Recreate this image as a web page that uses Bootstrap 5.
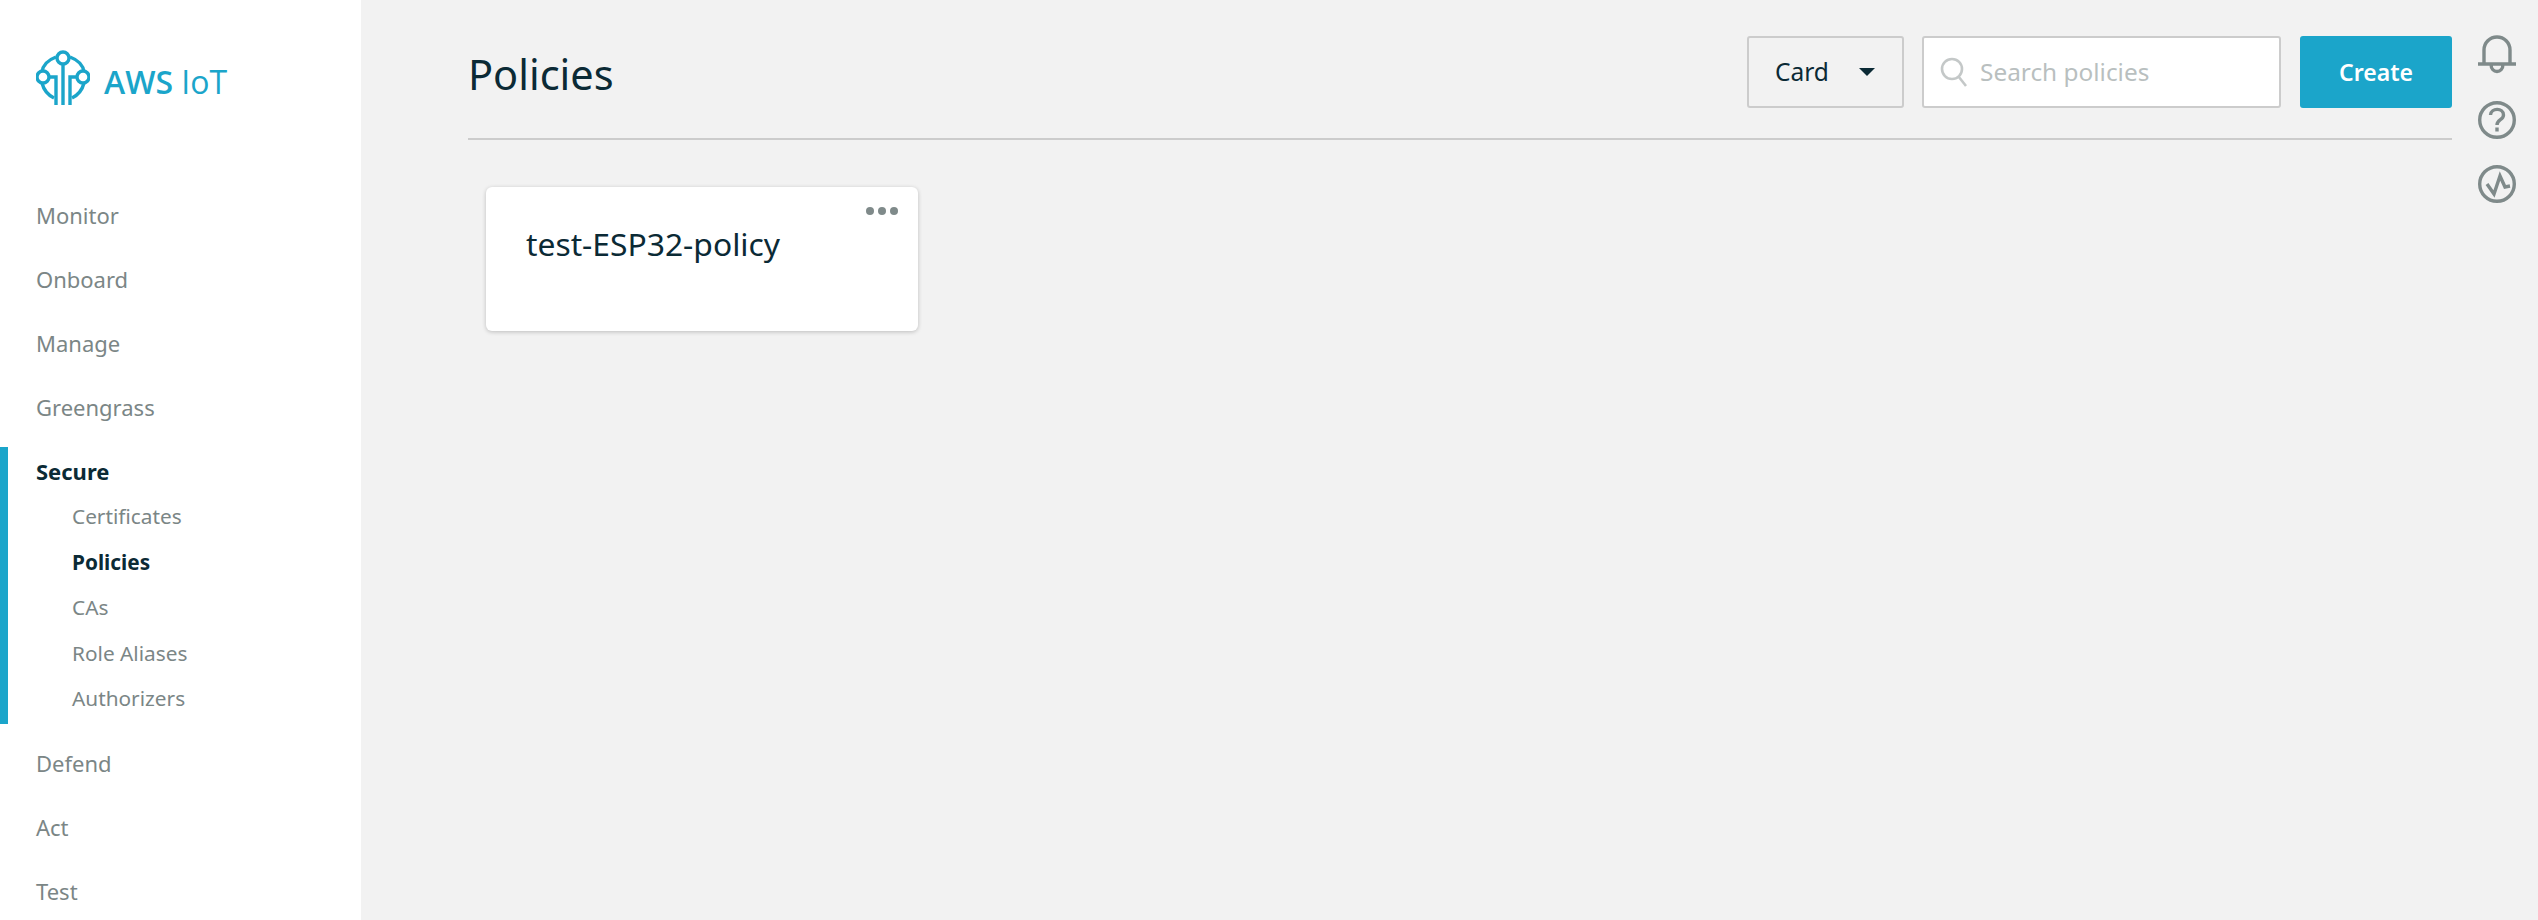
<!DOCTYPE html>
<html lang="en">

<head>
    <meta charset="UTF-8">
    <meta name="viewport" content="width=device-width, initial-scale=1.0">
    <title>AWS IoT - Policies</title>

    <link href="https://cdn.jsdelivr.net/npm/bootstrap@5.3.0/dist/css/bootstrap.min.css" rel="stylesheet">
    <script src="https://cdn.jsdelivr.net/npm/bootstrap@5.3.0/dist/js/bootstrap.bundle.min.js"></script>

    <style>
        body {
            background: #f2f2f2;
            color: #0b2a35;
            font-family: "Noto Sans", "Open Sans", sans-serif;
            height: 920px;
            overflow: hidden;
        }

        .side-panel {
            width: 361px;
            height: 920px;
            background: #fff;
            overflow: hidden;
        }

        .brand-row {
            height: 183px;
            padding: 50px 0 0 36px;
            color: #1ba5ca;
        }

        .brand-name {
            font-family: "Open Sans", sans-serif;
            font-size: 32px;
            line-height: 36px;
            margin: 14px 0 0 14px;
            font-weight: 600;
            white-space: nowrap;
        }

        .brand-name span {
            font-weight: 400;
        }

        .nav-top {
            display: block;
            height: 64px;
            line-height: 64px;
            padding-left: 36px;
            font-size: 22px;
            color: #7b8686;
            text-decoration: none;
        }

        .nav-block {
            border-left: 8px solid #1ba5ca;
            height: 277px;
            margin: 8px 0 7px;
        }

        .nav-block .nav-top {
            padding-left: 28px;
            height: 47px;
            line-height: 48px;
            color: #0b2a35;
            font-weight: 700;
        }

        .nav-sub {
            display: block;
            height: 45.6px;
            line-height: 44.6px;
            padding-left: 64px;
            font-size: 20.8px;
            color: #7b8686;
            text-decoration: none;
        }

        .nav-sub.is-current {
            color: #0b2a35;
            font-weight: 700;
        }

        .main-pane {
            padding: 36px 0 0 107px;
        }

        .page-head {
            height: 104px;
            border-bottom: 2px solid #ccc;
        }

        .page-title {
            font-size: 41.5px;
            line-height: 76px;
            font-weight: 400;
            margin: 0;
        }

        .view-btn {
            width: 157px;
            height: 72px;
            background: #f2f2f2;
            border: 2px solid #ccc;
            border-radius: 3px;
            font-size: 24.5px;
            color: #0b2a35;
            padding: 0 0 0 26px;
        }

        .view-btn::after {
            border-top-color: #0b2a35;
            border-width: 8px 8px 0;
            margin-left: 30px;
            vertical-align: 5px;
        }

        .search-box {
            width: 359px;
            height: 72px;
            background: #fff;
            border: 2px solid #ccc;
            border-radius: 3px;
            margin-left: 18px;
            padding-left: 16px;
        }

        .search-box input {
            border: 0;
            outline: 0;
            background: none;
            width: 280px;
            margin-left: 10px;
            font-size: 24.4px;
            color: #0b2a35;
        }

        .search-box input::placeholder {
            color: #b9bfbf;
        }

        .create-btn {
            width: 152px;
            height: 72px;
            margin-left: 19px;
            background: #1ba5ca;
            border: 0;
            border-radius: 3px;
            color: #fff;
            font-size: 23px;
            font-weight: 600;
        }

        .policy-tile {
            width: 432px;
            height: 144px;
            margin: 47px 0 0 18px;
            border: 0;
            border-radius: 6px;
            box-shadow: 0 1px 4px rgba(0, 0, 0, .22);
            padding: 36px 0 0 40px;
            font-size: 31.8px;
            line-height: 42px;
            color: #0b2a35;
        }

        .dots {
            position: absolute;
            top: 20px;
            right: 20px;
            gap: 4px;
        }

        .dots i {
            display: block;
            width: 8px;
            height: 8px;
            border-radius: 50%;
            background: #7f8a8a;
        }

        .icon-rail {
            width: 86px;
            padding: 35px 0 0 4px;
            gap: 25px;
        }
    </style>
</head>

<body>
    <div class="d-flex">
        <!-- sidebar -->
        <div class="side-panel flex-shrink-0">
            <div class="brand-row d-flex align-items-start">
                <svg width="54" height="56" viewBox="0 0 54 56" fill="none" stroke="#1ba5ca" stroke-width="3.4">
                    <path d="M20 7C12 10 7 14 6 22M34 7C42 10 47 14 48 22M6 33C8 41 12 45 18 48M48 33C46 41 42 45 36 48" />
                    <circle cx="27" cy="8" r="6" fill="#fff" />
                    <circle cx="7" cy="27" r="6" fill="#fff" />
                    <circle cx="47" cy="27" r="6" fill="#fff" />
                    <path d="M27 14V55M13 27H20V55M41 27H34V55" />
                </svg>
                <div class="brand-name">AWS <span>IoT</span></div>
            </div>

            <a class="nav-top" href="#">Monitor</a>
            <a class="nav-top" href="#">Onboard</a>
            <a class="nav-top" href="#">Manage</a>
            <a class="nav-top" href="#">Greengrass</a>
            <div class="nav-block">
                <a class="nav-top" href="#">Secure</a>
                <a class="nav-sub" href="#">Certificates</a>
                <a class="nav-sub is-current" href="#">Policies</a>
                <a class="nav-sub" href="#">CAs</a>
                <a class="nav-sub" href="#">Role Aliases</a>
                <a class="nav-sub" href="#">Authorizers</a>
            </div>
            <a class="nav-top" href="#">Defend</a>
            <a class="nav-top" href="#">Act</a>
            <a class="nav-top" href="#">Test</a>
        </div>

        <!-- main content -->
        <div class="main-pane flex-grow-1">
            <div class="page-head d-flex justify-content-between align-items-start">
                <h1 class="page-title">Policies</h1>
                <div class="d-flex">
                    <div class="dropdown">
                        <button class="view-btn dropdown-toggle text-start" type="button" data-bs-toggle="dropdown">Card</button>
                    </div>
                    <div class="search-box d-flex align-items-center">
                        <svg width="28" height="30" viewBox="0 0 28 30" fill="none" stroke="#c4c8c8" stroke-width="2.6">
                            <circle cx="12" cy="12" r="10" />
                            <path d="M18.500 19.500L26 29" />
                        </svg>
                        <input type="text" placeholder="Search policies">
                    </div>
                    <button class="create-btn" type="button">Create</button>
                </div>
            </div>

            <div class="card policy-tile">
                test-ESP32-policy
                <div class="dots d-flex"><i></i><i></i><i></i></div>
            </div>
        </div>

        <!-- right icons -->
        <div class="icon-rail d-flex flex-column align-items-center flex-shrink-0">
            <svg width="38" height="40" viewBox="0 0 38 40" fill="none" stroke="#7f8a8a" stroke-width="3.4">
                <path d="M0 29H38M6 29V15A13 13 0 0 1 32 15V29M13 29C13 39 25 39 25 29" />
            </svg>
            <svg width="38" height="40" viewBox="0 0 38 40" fill="none" stroke="#7f8a8a" stroke-width="3.4">
                <circle cx="19" cy="20" r="17.300" />
                <path d="M12.500 15C13 7.500 25.500 7.500 25.500 15C25.500 20 19 19.500 19 25" />
                <path d="M19 27.500V31.500" />
            </svg>
            <svg width="38" height="38" viewBox="0 0 38 38" fill="none" stroke="#7f8a8a" stroke-width="3.4">
                <circle cx="19" cy="19" r="17.300" />
                <path d="M9 19L16 29L22 11L27 22L32 21" />
            </svg>
        </div>
    </div>
</body>

</html>
